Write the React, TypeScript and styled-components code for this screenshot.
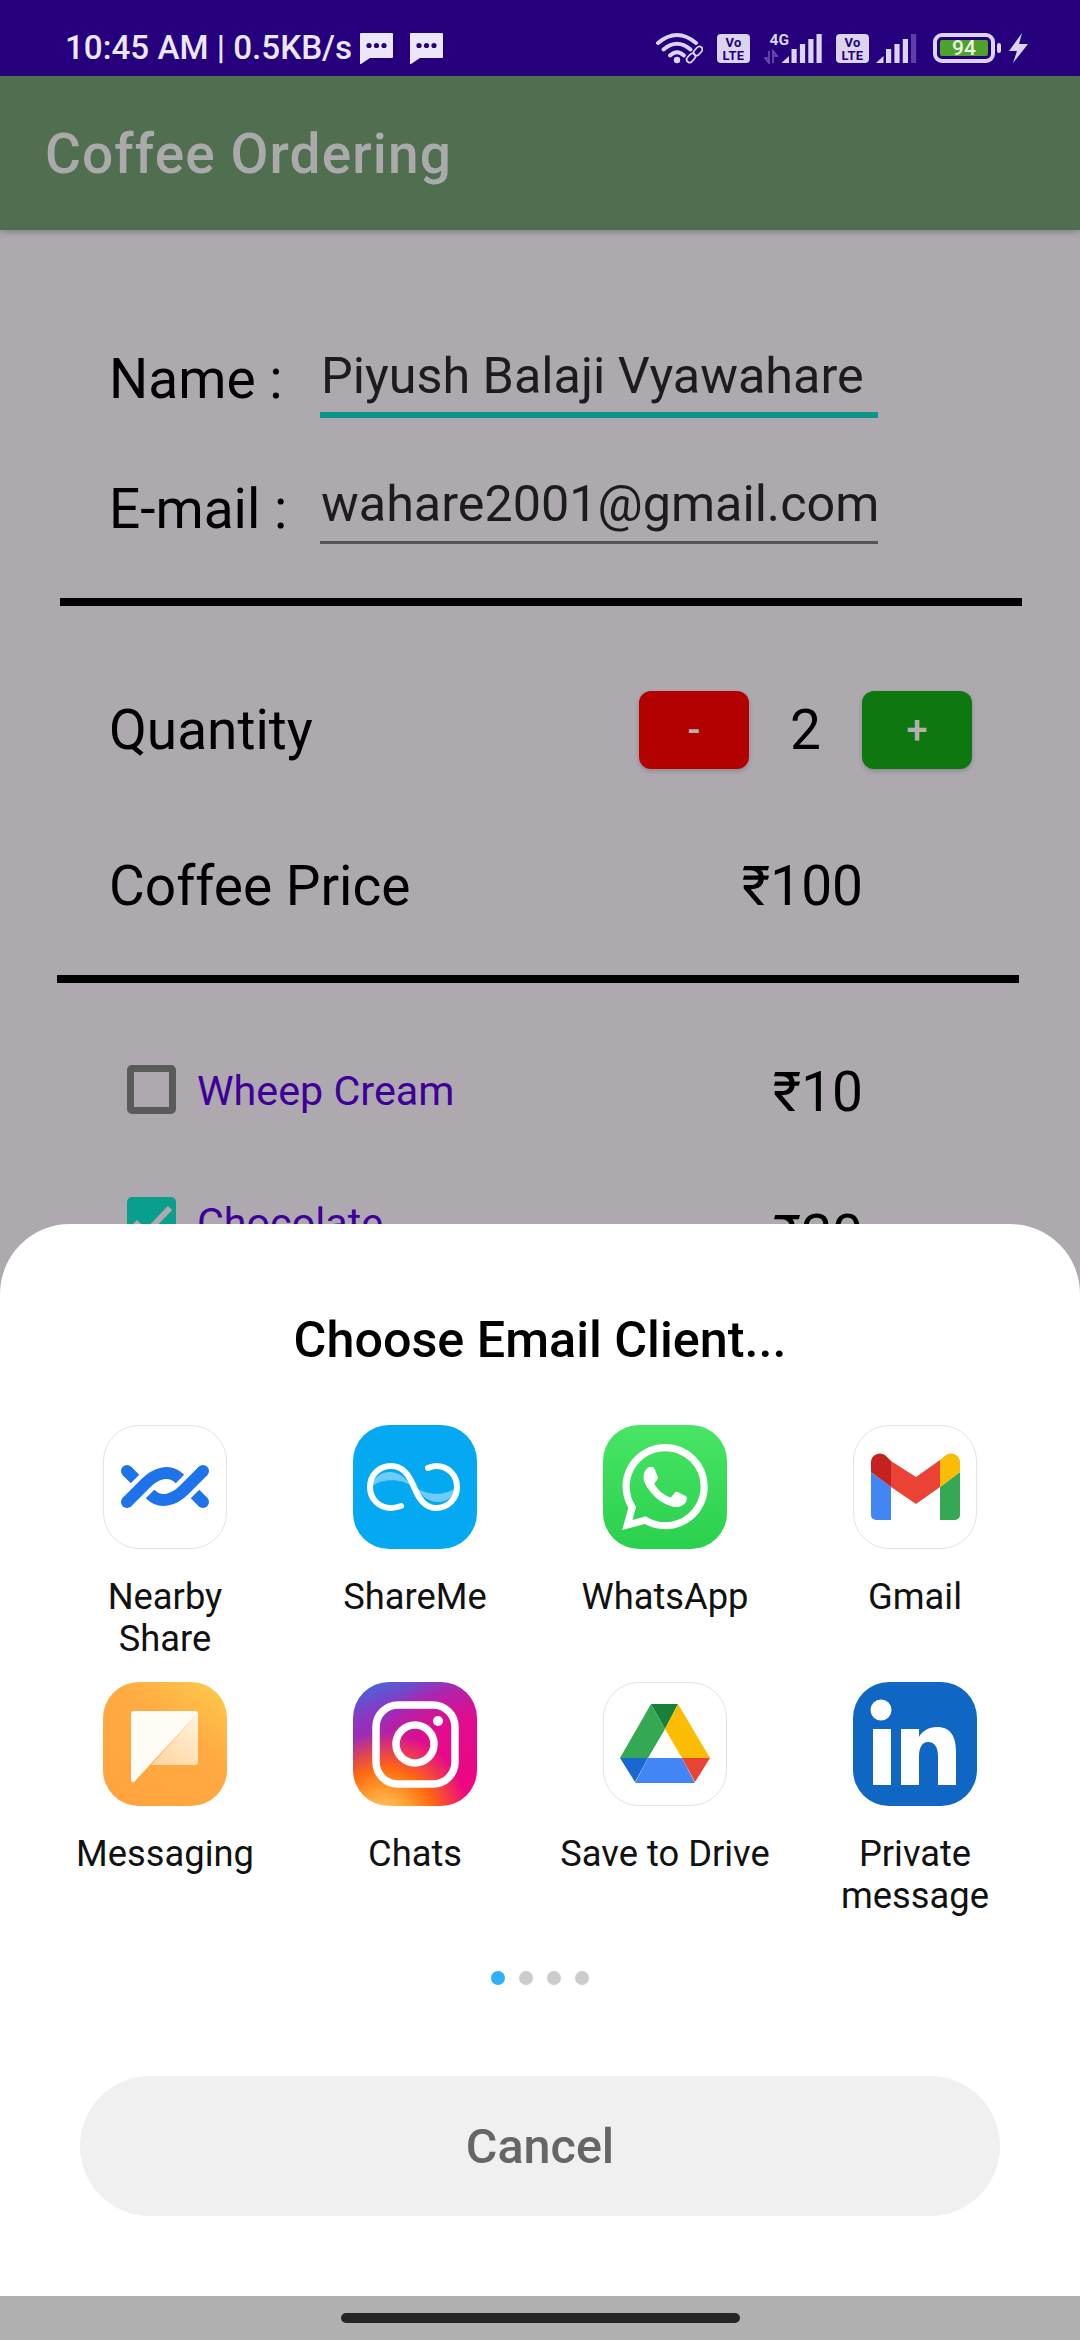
import React from "react";
import styled, { createGlobalStyle } from "styled-components";
import { SiWhatsapp } from "react-icons/si";

const GlobalStyle = createGlobalStyle`
  html, body {
    margin: 0;
    padding: 0;
    background: #aea9af;
  }
  * {
    box-sizing: border-box;
  }
`;

const Screen = styled.div`
  width: 1080px;
  height: 2340px;
  display: flex;
  flex-direction: column;
  overflow: hidden;
  font-family: Roboto, "Noto Sans", sans-serif;
  background: #aea9af;
`;

const StatusBar = styled.div`
  height: 76px;
  flex: none;
  display: flex;
  align-items: center;
  justify-content: space-between;
  padding: 20px 52px 0 65px;
  background: #26007c;
  color: #ebe6f8;
`;

const StatusLeft = styled.div`
  display: flex;
  align-items: center;
  gap: 8px;
  font-size: 33.2px;
  font-weight: 500;
  line-height: 38px;
`;

const Bubbles = styled.div`
  display: flex;
  gap: 17px;
  svg {
    display: block;
  }
`;

const StatusRight = styled.div`
  display: flex;
  align-items: center;
  gap: 14px;
`;

const VoLte = styled.div`
  width: 33px;
  height: 29px;
  border-radius: 4px;
  background: #dcd4ef;
  color: #26007c;
  font-size: 13px;
  font-weight: 700;
  line-height: 13px;
  letter-spacing: 0.3px;
  text-align: center;
  padding-top: 2px;
`;

const DataSignal = styled.svg`
  margin-top: -6px;
`;

const SimSignal = styled.svg`
  margin-left: -7px;
`;

const Battery = styled.div`
  position: relative;
  width: 62px;
  height: 30px;
  margin: 0 6px 0 2px;
  border: 4px solid #dcd4ef;
  border-radius: 9px;
  padding: 3px;
  &::after {
    content: "";
    position: absolute;
    right: -10px;
    top: 6px;
    width: 4px;
    height: 10px;
    border-radius: 2px;
    background: #dcd4ef;
  }
`;

const BatteryLevel = styled.div`
  height: 100%;
  border-radius: 2px;
  background: #4ea12c;
  color: #eaf5e2;
  font-size: 21px;
  font-weight: 500;
  line-height: 17px;
  text-align: center;
`;

const Bolt = styled.svg`
  margin-left: -6px;
`;

const AppBar = styled.div`
  height: 154px;
  flex: none;
  display: flex;
  align-items: center;
  padding: 2px 0 0 45px;
  background: #506f50;
  box-shadow: 0 2px 6px rgba(0, 0, 0, 0.25);
  color: #aaaaaa;
  font-size: 55px;
  font-weight: 500;
  letter-spacing: 1.1px;
  position: relative;
  z-index: 1;
`;

const Content = styled.div`
  position: relative;
  flex: 1;
  overflow: hidden;
  color: #000;
`;

const FieldRow = styled.div<{ $top: number }>`
  display: flex;
  height: 88px;
  margin-top: ${({ $top }) => $top}px;
  padding-left: 109px;
`;

const FieldLabel = styled.div<{ $drop: number }>`
  width: 211px;
  font-size: 55px;
  line-height: 60px;
  padding-top: ${({ $drop }) => $drop}px;
`;

const FieldValue = styled.div<{ $focused?: boolean }>`
  width: 558px;
  height: 88px;
  display: flex;
  align-items: flex-end;
  padding: 0 0 ${({ $focused }) => ($focused ? 6 : 7)}px 1px;
  font-size: 50.3px;
  line-height: 60px;
  white-space: nowrap;
  border-bottom: ${({ $focused }) =>
    $focused ? "6px solid #0a9586" : "3px solid #555555"};
  color: #1c1c1c;
`;

const Divider = styled.div<{ $left: number; $top: number }>`
  width: 962px;
  height: 8px;
  background: #000;
  margin-left: ${({ $left }) => $left}px;
  margin-top: ${({ $top }) => $top}px;
`;

const QuantityRow = styled.div`
  display: grid;
  grid-template-columns: 530px 110px 113px 110px;
  align-items: center;
  height: 78px;
  margin-top: 85px;
  padding-left: 109px;
  font-size: 55px;
`;

const StepButton = styled.div<{ $color: string }>`
  height: 78px;
  border-radius: 12px;
  display: flex;
  align-items: center;
  justify-content: center;
  background: ${({ $color }) => $color};
  box-shadow: 0 2px 5px rgba(0, 0, 0, 0.2);
  color: #b3b0b0;
  font-size: 38px;
  font-weight: 500;
`;

const Count = styled.div`
  text-align: center;
`;

const PriceRow = styled.div`
  display: flex;
  justify-content: space-between;
  align-items: center;
  height: 78px;
  margin-top: 78px;
  padding: 0 217px 0 109px;
  font-size: 55px;
`;

const ToppingRow = styled.div<{ $top: number }>`
  display: flex;
  align-items: center;
  height: 49px;
  margin-top: ${({ $top }) => $top}px;
  padding: 0 217px 0 127px;
`;

const Check = styled.div<{ $checked?: boolean }>`
  width: 49px;
  height: 49px;
  border-radius: 5px;
  flex: none;
  border: ${({ $checked }) => ($checked ? "none" : "7px solid #5a5a5a")};
  background: ${({ $checked }) => ($checked ? "#0a9e8c" : "transparent")};
`;

const ToppingName = styled.div`
  flex: 1;
  margin: 3px 0 0 21px;
  color: #3f0099;
  font-size: 41.25px;
  line-height: 50px;
`;

const ToppingPrice = styled.div<{ $shift: number }>`
  font-size: 55px;
  line-height: 50px;
  margin-top: ${({ $shift }) => $shift}px;
`;

const Sheet = styled.div`
  position: absolute;
  left: 0;
  right: 0;
  bottom: 0;
  height: 1072px;
  background: #fff;
  border-radius: 70px 70px 0 0;
  padding: 88px 80px 80px;
`;

const SheetTitle = styled.div`
  text-align: center;
  font-size: 50.3px;
  font-weight: 500;
  line-height: 56px;
  color: #000;
`;

const AppGrid = styled.div`
  display: grid;
  grid-template-columns: repeat(4, 250px);
  grid-auto-rows: 257px;
  margin: 57px -40px 0;
`;

const AppCell = styled.div`
  display: flex;
  flex-direction: column;
  align-items: center;
`;

const IconTile = styled.div<{ $bg?: string; $outlined?: boolean }>`
  width: 124px;
  height: 124px;
  border-radius: 36px;
  flex: none;
  display: flex;
  align-items: center;
  justify-content: center;
  overflow: hidden;
  background: ${({ $bg }) => $bg ?? "#fff"};
  border: ${({ $outlined }) => ($outlined ? "1px solid #e2e2e2" : "none")};
  color: #fff;
  svg {
    display: block;
    flex: none;
  }
`;

const AppLabel = styled.div`
  margin-top: 27px;
  width: 210px;
  text-align: center;
  font-size: 36.3px;
  line-height: 42px;
  color: #111;
`;

const Dots = styled.div`
  display: flex;
  justify-content: center;
  gap: 14px;
  margin-top: 32px;
`;

const Dot = styled.div<{ $active?: boolean }>`
  width: 14px;
  height: 14px;
  border-radius: 50%;
  background: ${({ $active }) => ($active ? "#2fb0fb" : "#cccccc")};
`;

const CancelButton = styled.div`
  height: 140px;
  margin-top: 91px;
  border-radius: 70px;
  display: flex;
  align-items: center;
  justify-content: center;
  background: #f0f0f0;
  color: #666;
  font-size: 48.5px;
  font-weight: 500;
`;

const NavBar = styled.div`
  height: 44px;
  flex: none;
  display: flex;
  justify-content: center;
  padding-top: 17px;
  background: #b0b0b0;
`;

const NavHandle = styled.div`
  width: 399px;
  height: 10px;
  border-radius: 5px;
  background: #252525;
`;

const ChatBubble = () => (
  <svg width="33" height="31" viewBox="0 0 33 31">
    <path d="M1 0H32a1 1 0 0 1 1 1V24a1 1 0 0 1-1 1H10L1 31H0V1a1 1 0 0 1 1-1Z" fill="#ebe6f8" />
    <circle cx="9" cy="12.5" r="2.6" fill="#26007c" />
    <circle cx="16.5" cy="12.5" r="2.6" fill="#26007c" />
    <circle cx="24" cy="12.5" r="2.6" fill="#26007c" />
  </svg>
);

const WifiIcon = () => (
  <svg width="47" height="32" viewBox="0 0 47 32" fill="none" stroke="#dcd4ef" strokeLinecap="round">
    <path d="M2 11Q21 -5 40 11" strokeWidth="4" />
    <path d="M7.5 17.5Q21 6 34.5 17.5" strokeWidth="4" />
    <path d="M14 23.5Q21 17 28 23.5" strokeWidth="4" />
    <circle cx="21" cy="28" r="3.2" fill="#dcd4ef" stroke="none" />
    <g strokeWidth="1.8">
      <rect x="30" y="23" width="10" height="6" rx="3" transform="rotate(-48 35 26)" />
      <rect x="37" y="16" width="10" height="6" rx="3" transform="rotate(-48 42 19)" />
    </g>
  </svg>
);

const bars = (dimLast: boolean, dx: number) => (
  <>
    <path d={`M${dx} 30L${dx + 7.5} 23V30Z`} fill="#dcd4ef" />
    <rect x={dx + 10} y="16" width="5.2" height="14" fill="#dcd4ef" />
    <rect x={dx + 18.4} y="11" width="5.2" height="19" fill="#dcd4ef" />
    <rect x={dx + 26.8} y="6" width="5.2" height="24" fill="#dcd4ef" />
    <rect x={dx + 35} y="1" width="5.2" height="29" fill={dimLast ? "#5e3fa8" : "#dcd4ef"} />
  </>
);

const Signal4G = () => (
  <DataSignal width="58" height="37" viewBox="0 -6 58 37">
    <text x="5.5" y="12" fontFamily="Roboto, sans-serif" fontSize="15.5" fontWeight="700" fill="#dcd4ef">
      4G
    </text>
    <path d="M5 18V30L1 25H4M9 30V18L13 23H10" stroke="#6e52b0" strokeWidth="1.6" fill="none" />
    {bars(false, 17.5)}
  </DataSignal>
);

const NearbyIcon = () => (
  <svg width="124" height="124" viewBox="0 0 124 124" fill="none" stroke="#1f73e8" strokeWidth="12">
    <path d="M24 46L32 54" />
    <circle cx="24" cy="46" r="6" fill="#1f73e8" stroke="none" />
    <path d="M24 77L43 58C52 49 66 43 77 54" />
    <circle cx="24" cy="77" r="6" fill="#1f73e8" stroke="none" />
    <path d="M100 46L81 65C72 74 58 80 47 69" />
    <circle cx="100" cy="46" r="6" fill="#1f73e8" stroke="none" />
    <path d="M100 77L92 69" />
    <circle cx="100" cy="77" r="6" fill="#1f73e8" stroke="none" />
  </svg>
);

const ShareMeIcon = () => (
  <svg width="124" height="124" viewBox="0 0 124 124" fill="none">
    <path d="M18 62C20 52 30 46 38 47C50 48 54 56 60 62C50 54 30 52 18 62Z" fill="#6dcdf8" />
    <path d="M104 62C102 72 92 78 84 77C72 76 68 68 62 62C72 70 92 72 104 62Z" fill="#6dcdf8" />
    <path
      d="M48 81C45 82 42 83 38 83C26 83 17 74 17 62C17 50 26 41 38 41C50 41 56 50 61 62C66 74 72 83 83 83C95 83 104 74 104 62C104 50 95 41 83 41C80 41 78 42 75 43"
      stroke="#fff"
      strokeWidth="6"
      strokeLinecap="round"
    />
  </svg>
);

const GmailIcon = () => (
  <svg width="124" height="124" viewBox="0 0 124 124">
    <path d="M18 47L38 62V95H23A5 5 0 0 1 18 90Z" fill="#4285f4" />
    <path d="M107 47L87 62V95H102A5 5 0 0 0 107 90Z" fill="#34a853" />
    <path d="M38 36L63 52L87 35V62L63 79L38 62Z" fill="#ea4335" />
    <path d="M18 47V37A9 9 0 0 1 32 30L38 36V62Z" fill="#c5221f" />
    <path d="M87 35L93 30A9 9 0 0 1 107 37V47L87 62Z" fill="#fbbc04" />
  </svg>
);

const MessagingIcon = () => (
  <svg width="124" height="124" viewBox="0 0 124 124">
    <defs>
      <linearGradient id="msgFold" x1="0.9" y1="0" x2="0.3" y2="1">
        <stop offset="0" stopColor="#fff3e0" />
        <stop offset="1" stopColor="#ffd7a3" />
      </linearGradient>
    </defs>
    <path d="M95 31V80A3 3 0 0 1 92 83H48Z" fill="url(#msgFold)" />
    <path d="M31 29H92A3 3 0 0 1 95 31L31 100A2 2 0 0 1 28 98V32A3 3 0 0 1 31 29Z" fill="#fffbf5" />
  </svg>
);

const InstagramIcon = () => (
  <svg width="124" height="124" viewBox="0 0 124 124" fill="none" stroke="#fff" strokeWidth="7.5">
    <rect x="23" y="23" width="79" height="79" rx="22" />
    <circle cx="62" cy="62" r="19" />
    <circle cx="85" cy="39" r="5" fill="#fff" stroke="none" />
  </svg>
);

const DriveIcon = () => (
  <svg width="124" height="124" viewBox="0 0 124 124">
    <path d="M48 22H75L62 47Z" fill="#188038" />
    <path d="M48 22L62 47L45 76H17Z" fill="#34a853" />
    <path d="M75 22L107 76H79L62 47Z" fill="#fbbc04" />
    <path d="M17 76H45L32 100Z" fill="#1967d2" />
    <path d="M45 76H79L92 101H32Z" fill="#4285f4" />
    <path d="M79 76H107L92 100Z" fill="#ea4335" />
  </svg>
);

const LinkedInIcon = () => (
  <svg width="124" height="124" viewBox="0 0 124 124" fill="#fff">
    <circle cx="28" cy="28" r="10.5" />
    <rect x="20" y="47" width="18" height="56" />
    <path d="M48 47H66V55C69 49 76 45 84 45C98 45 103 55 103 70V103H85V74C85 66 82 60 75 60C69 60 66 66 66 74V103H48Z" />
  </svg>
);

const instagramBg =
  "radial-gradient(circle at 25% 110%, #fdd87a 0%, #ff9a2e 18%, #ff6a10 30%, transparent 52%), radial-gradient(circle at 100% 90%, #f0047f 0%, #e00d8f 45%, transparent 75%), linear-gradient(160deg, #3a6fdc 0%, #8f34c0 25%, #c0149c 60%, #e00d8f 100%)";

const apps = [
  { name: "Nearby Share", outlined: true, icon: <NearbyIcon /> },
  { name: "ShareMe", bg: "#05a9f1", icon: <ShareMeIcon /> },
  { name: "WhatsApp", bg: "linear-gradient(#48e565, #2ad04d)", icon: <SiWhatsapp size={86} /> },
  { name: "Gmail", outlined: true, icon: <GmailIcon /> },
  { name: "Messaging", bg: "linear-gradient(215deg, #ffcb4b 0%, #ffaa42 40%, #ffa23e 100%)", icon: <MessagingIcon /> },
  { name: "Chats", bg: instagramBg, icon: <InstagramIcon /> },
  { name: "Save to Drive", outlined: true, icon: <DriveIcon /> },
  { name: "Private message", bg: "#0f67c3", icon: <LinkedInIcon /> },
];

export default function App() {
  return (
    <Screen>
      <GlobalStyle />
      <StatusBar>
        <StatusLeft>
          <span>10:45 AM | 0.5KB/s</span>
          <Bubbles>
            <ChatBubble />
            <ChatBubble />
          </Bubbles>
        </StatusLeft>
        <StatusRight>
          <WifiIcon />
          <VoLte>
            Vo
            <br />
            LTE
          </VoLte>
          <Signal4G />
          <VoLte>
            Vo
            <br />
            LTE
          </VoLte>
          <SimSignal width="41" height="31" viewBox="0 0 41 31">
            {bars(true, 0)}
          </SimSignal>
          <Battery>
            <BatteryLevel>94</BatteryLevel>
          </Battery>
          <Bolt width="19" height="30" viewBox="0 0 19 30">
            <path d="M13 0L0 18H8L4 30L19 11H10Z" fill="#dcd4ef" />
          </Bolt>
        </StatusRight>
      </StatusBar>

      <AppBar>Coffee Ordering</AppBar>

      <Content>
        <FieldRow $top={100}>
          <FieldLabel $drop={19}>Name :</FieldLabel>
          <FieldValue $focused>Piyush Balaji Vyawahare</FieldValue>
        </FieldRow>
        <FieldRow $top={38}>
          <FieldLabel $drop={23}>E-mail :</FieldLabel>
          <FieldValue>wahare2001@gmail.com</FieldValue>
        </FieldRow>
        <Divider $left={60} $top={54} />
        <QuantityRow>
          <span>Quantity</span>
          <StepButton $color="#b30000">-</StepButton>
          <Count>2</Count>
          <StepButton $color="#0f770f">+</StepButton>
        </QuantityRow>
        <PriceRow>
          <span>Coffee Price</span>
          <span>₹100</span>
        </PriceRow>
        <Divider $left={57} $top={50} />
        <ToppingRow $top={82}>
          <Check />
          <ToppingName>Wheep Cream</ToppingName>
          <ToppingPrice $shift={4}>₹10</ToppingPrice>
        </ToppingRow>
        <ToppingRow $top={83}>
          <Check $checked>
            <svg width="49" height="49" viewBox="0 0 49 49" fill="none">
              <path d="M8 25L19 36L43 11" stroke="#aeaaaf" strokeWidth="6" />
            </svg>
          </Check>
          <ToppingName>Chocolate</ToppingName>
          <ToppingPrice $shift={26}>₹20</ToppingPrice>
        </ToppingRow>

        <Sheet>
          <SheetTitle>Choose Email Client...</SheetTitle>
          <AppGrid>
            {apps.map((app) => (
              <AppCell key={app.name}>
                <IconTile $bg={app.bg} $outlined={app.outlined}>
                  {app.icon}
                </IconTile>
                <AppLabel>{app.name}</AppLabel>
              </AppCell>
            ))}
          </AppGrid>
          <Dots>
            <Dot $active />
            <Dot />
            <Dot />
            <Dot />
          </Dots>
          <CancelButton>Cancel</CancelButton>
        </Sheet>
      </Content>

      <NavBar>
        <NavHandle />
      </NavBar>
    </Screen>
  );
}
